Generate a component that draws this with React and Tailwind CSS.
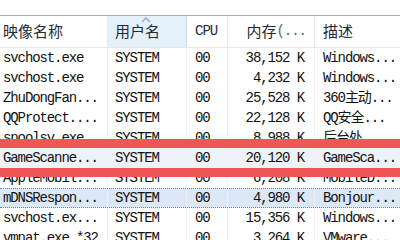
const rows = [
  { name: 'svchost.exe', user: 'SYSTEM', cpu: '00', mem: '38,152 K', desc: 'Windows...' },
  { name: 'svchost.exe', user: 'SYSTEM', cpu: '00', mem: '4,232 K', desc: 'Windows...' },
  { name: 'ZhuDongFan...', user: 'SYSTEM', cpu: '00', mem: '25,528 K', desc: '360主动...' },
  { name: 'QQProtect....', user: 'SYSTEM', cpu: '00', mem: '22,128 K', desc: 'QQ安全...' },
  { name: 'spoolsv.exe', user: 'SYSTEM', cpu: '00', mem: '8,988 K', desc: '后台处...' },
  { name: 'GameScanne...', user: 'SYSTEM', cpu: '00', mem: '20,120 K', desc: 'GameSca...', hover: true },
  { name: 'AppleMobil...', user: 'SYSTEM', cpu: '00', mem: '6,208 K', desc: 'MobileD...' },
  { name: 'mDNSRespon...', user: 'SYSTEM', cpu: '00', mem: '4,980 K', desc: 'Bonjour...', selected: true },
  { name: 'svchost.ex...', user: 'SYSTEM', cpu: '00', mem: '15,356 K', desc: 'Windows...' },
  { name: 'vmnat.exe *32', user: 'SYSTEM', cpu: '00', mem: '3,264 K', desc: 'VMware...' },
];

const cols = 'grid grid-cols-[108px_79px_41px_87px_1fr]';
const mono = "font-['Liberation_Mono','Noto_Sans_CJK_SC',monospace]";
const cjk = "font-['Noto_Sans_CJK_SC','Noto_Sans',sans-serif]";

export default function App() {
  return (
    <div className="relative w-[400px] h-[240px] overflow-hidden bg-white">
      <div className="h-[15px]" />

      {/* Header */}
      <div className={`${cols} h-[33px] border-t border-[#a9a9a9] border-b border-b-[#e6e6e6] text-[15px] text-[#1f2a38] ${cjk}`}>
        <div className="flex items-center pl-[3px] border-r border-[#e6e8eb]">映像名称</div>
        <div className="relative flex items-center pl-[7px] bg-[#e4f1fb] border-r border-[#c8dcec]">
          用户名
          <svg className="absolute left-[33px] top-[1px]" width="10" height="6" viewBox="0 0 10 6">
            <path d="M1 5 L5 1 L9 5" fill="none" stroke="#8fa6bf" strokeWidth="1.3" />
          </svg>
        </div>
        <div className={`flex items-center pl-[8px] border-r border-[#e6e8eb] text-[14px] tracking-[-1px] ${mono}`}>CPU</div>
        <div className="flex items-center justify-end pr-[8px] border-r border-[#e6e8eb]">
          <span>内存</span>
          <span className={`text-[14px] tracking-[-1px] text-[#5a6470] ${mono}`}>(...</span>
        </div>
        <div className="flex items-center pl-[8px]">描述</div>
      </div>

      {/* Rows */}
      <div className={`text-[14px] tracking-[-1.1px] text-[#111] ${mono}`}>
        {rows.map((r, i) => (
          <div
            key={i}
            className={`${cols} h-[20px] whitespace-nowrap ${
              r.selected
                ? 'bg-[#dce8f6] border-y border-dotted border-[#6f86a8]'
                : r.hover
                ? 'bg-[#eef3f9]'
                : ''
            }`}
          >
            <div className="flex items-center pl-[3px] overflow-hidden border-r border-[#f0f0f0]">{r.name}</div>
            <div className="flex items-center pl-[7px] overflow-hidden border-r border-[#f0f0f0]">{r.user}</div>
            <div className="flex items-center pl-[8px] overflow-hidden border-r border-[#f0f0f0]">{r.cpu}</div>
            <div className="flex items-center justify-end pr-[10px] overflow-hidden border-r border-[#f0f0f0]">{r.mem}</div>
            <div className="flex items-center pl-[8px] overflow-hidden">{r.desc}</div>
          </div>
        ))}
      </div>

      {/* Red marker lines drawn over the list */}
      <div className="absolute left-0 right-0 top-[139px] h-[9px] bg-[#ef5656]" />
      <div className="absolute left-0 right-0 top-[168px] h-[9px] bg-[#ef5656]" />
    </div>
  );
}
